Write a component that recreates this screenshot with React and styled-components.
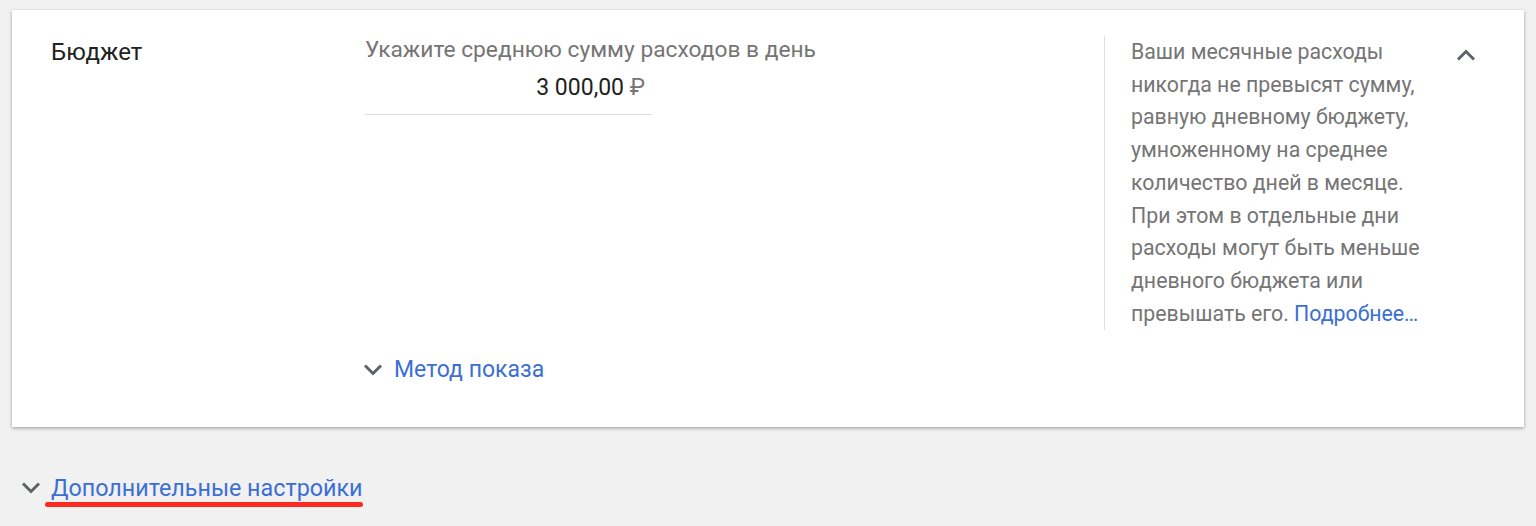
import React from 'react';
import styled, { createGlobalStyle } from 'styled-components';

const GlobalStyle = createGlobalStyle`
  html, body {
    margin: 0;
    padding: 0;
    background: #f1f1f1;
    font-family: Roboto, "Liberation Sans", Arial, sans-serif;
  }
`;

const Page = styled.div`
  width: 1536px;
  height: 526px;
  padding: 10px 12px 0 12px;
  box-sizing: border-box;
  overflow: hidden;
`;

const Card = styled.div`
  background: #fff;
  height: 417px;
  box-shadow: 0 1px 3px rgba(0, 0, 0, 0.25), 0 2px 4px rgba(0, 0, 0, 0.12);
  display: grid;
  grid-template-columns: 314px 739px 1fr;
  padding: 26px 0 0 39px;
  box-sizing: border-box;
`;

const Label = styled.div`
  font-size: 24px;
  color: #212121;
  line-height: 32px;
`;

const Field = styled.div`
  display: flex;
  flex-direction: column;
`;

const Hint = styled.div`
  font-size: 22.75px;
  color: #757575;
  line-height: 28px;
`;

const AmountBox = styled.div`
  width: 287px;
  border-bottom: 1px solid #dcdcdc;
  text-align: right;
  padding: 11px 7px 13px 0;
  box-sizing: border-box;
  font-size: 23px;
  color: #212121;
  line-height: 26px;
`;

const Currency = styled.span`
  color: #757575;
`;

const Toggle = styled.div`
  display: flex;
  align-items: center;
  gap: ${p => p.$gap || 11}px;
  margin-top: ${p => p.$top || 0}px;
  margin-left: ${p => p.$left || 0}px;
  font-size: ${p => p.$size || 23}px;
  color: #3b6fd4;
  line-height: 26px;
`;

const Side = styled.div`
  display: flex;
  align-items: flex-start;
`;

const HelpText = styled.div`
  border-left: 1px solid #e0e0e0;
  padding-left: 26px;
  width: 296px;
  font-size: 21.3px;
  color: #757575;
  line-height: 32.7px;
`;

const Link = styled.span`
  color: #3b6fd4;
`;

const CollapseBtn = styled.div`
  margin-left: 27px;
  margin-top: 7px;
  width: 24px;
  height: 24px;
  display: flex;
  align-items: center;
  justify-content: center;
`;

const Footer = styled.div`
  padding: 48px 0 0 9px;
`;

const Underlined = styled.span`
  position: relative;
  &::after {
    content: '';
    position: absolute;
    left: -6px;
    right: -1px;
    bottom: -6px;
    height: 5px;
    border-radius: 3px;
    background: #ff2a1f;
  }
`;

const Chevron = ({ up }) => (
  <svg width="20" height="12" viewBox="0 0 20 12">
    <path
      d={up ? 'M2 10.5L10 2.5L18 10.5' : 'M2 1.5L10 9.5L18 1.5'}
      fill="none"
      stroke="#5f6368"
      strokeWidth="3"
    />
  </svg>
);

export default function App() {
  return (
    <>
      <GlobalStyle />
      <Page>
        <Card>
          <Label>Бюджет</Label>
          <Field>
            <Hint>Укажите среднюю сумму расходов в день</Hint>
            <AmountBox>
              3 000,00 <Currency>₽</Currency>
            </AmountBox>
            <Toggle $top={242} $left={-2}>
              <Chevron />
              Метод показа
            </Toggle>
          </Field>
          <Side>
            <HelpText>
              Ваши месячные расходы никогда не превысят сумму, равную дневному
              бюджету, умноженному на среднее количество дней в месяце. При этом
              в отдельные дни расходы могут быть меньше дневного бюджета или
              превышать его. <Link>Подробнее…</Link>
            </HelpText>
            <CollapseBtn>
              <Chevron up />
            </CollapseBtn>
          </Side>
        </Card>
        <Footer>
          <Toggle $gap={10} $size={23.3}>
            <Chevron />
            <Underlined>Дополнительные настройки</Underlined>
          </Toggle>
        </Footer>
      </Page>
    </>
  );
}
